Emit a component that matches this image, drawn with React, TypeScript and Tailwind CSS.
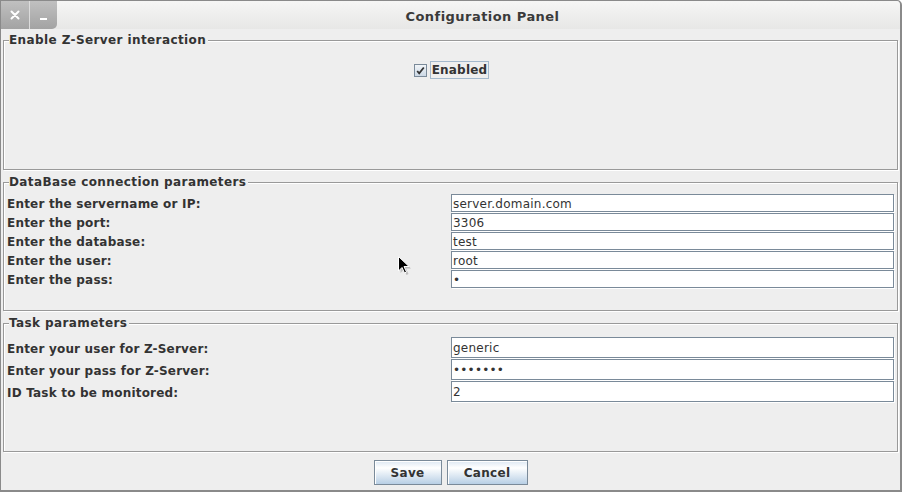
import React from "react";

function Panel({ title, h, children, className = "" }: { title: string; h: string; children?: React.ReactNode; className?: string }) {
  return (
    <div className={`w-[895px] ${h} border border-[#999999] shadow-[inset_1px_1px_0_#ffffff,1px_1px_0_#ffffff] ${className}`}>
      <div className="-mt-[8px] ml-[5px] flex">
        <span className="bg-[#eeeeee] pr-[2px] text-[12px] leading-[15px] font-bold tracking-[0.4px] text-[#333333]">{title}</span>
      </div>
      {children}
    </div>
  );
}

function Row({ label, value, rowH, fieldH }: { label: string; value: string; rowH: string; fieldH: string }) {
  return (
    <div className={`flex items-start ${rowH}`}>
      <div className={`w-[447px] pl-[3px] pt-[2px] flex items-center ${fieldH} text-[12px] font-bold tracking-[0.2px] text-[#333333] whitespace-nowrap`}>{label}</div>
      <div className={`w-[443px] ${fieldH} bg-white border border-[#7a8a99] shadow-[1px_1px_0_#ffffff] flex items-center pl-[1px] pt-px text-[12px] tracking-[0.23px] text-[#333333] leading-[16px] whitespace-nowrap`}>
        {value}
      </div>
    </div>
  );
}

export default function App() {
  return (
    <div className="relative w-[902px] h-[492px] bg-[#eeeeee] border-l border-t border-r-2 border-b-2 border-[#8a8a8a] rounded-tr-[5px] flex flex-col font-['DejaVu_Sans',sans-serif] overflow-hidden">
      {/* title bar */}
      <div className="flex h-[28px] bg-gradient-to-b from-[#f6f6f5] to-[#e7e7e6] rounded-tr-[4px]">
        <div className="w-[28px] h-[28px] bg-gradient-to-b from-[#c0c0c0] to-[#a3a3a3] flex items-center justify-center">
          <svg width="10" height="10" viewBox="0 0 10 10">
            <path d="M1.5 1.5 L8.5 8.5 M8.5 1.5 L1.5 8.5" stroke="#ffffff" strokeWidth="2" strokeLinecap="round" />
          </svg>
        </div>
        <div className="w-px bg-[#dcdcdc]" />
        <div className="w-[27px] h-[28px] bg-gradient-to-b from-[#c0c0c0] to-[#a3a3a3] rounded-br-[5px] flex items-end justify-center pb-[9px]">
          <div className="w-[7px] h-[2px] bg-white" />
        </div>
        <div className="flex-1 pl-[8px] text-center text-[13px] font-bold tracking-[0.45px] leading-[31px] text-[#3a3a3a]">Configuration Panel</div>
      </div>

      <div className="pl-[2px] flex flex-col">
        <Panel title="Enable Z-Server interaction" h="h-[130px]" className="mt-[11px]">
          <div className="mt-[13px] pl-[2px] flex justify-center items-center gap-[3px]">
            <div className="w-[13px] h-[13px] border border-[#7a8a99] bg-gradient-to-b from-[#f2f5f8] to-[#cbd8e5] flex items-center justify-center">
              <svg width="9" height="9" viewBox="0 0 9 9">
                <path d="M1.2 5 L3.2 7.3 L7.8 1.5" stroke="#333333" strokeWidth="1.8" fill="none" />
              </svg>
            </div>
            <div className="h-[18px] border border-[#a3b8cc] px-px flex items-center text-[12px] font-bold tracking-[0.2px] text-[#333333]">Enabled</div>
          </div>
        </Panel>

        <Panel title="DataBase connection parameters" h="h-[129px]" className="mt-[12px]">
          <div className="mt-[4px] flex flex-col">
            <Row label="Enter the servername or IP:" value="server.domain.com" rowH="h-[19px]" fieldH="h-[18px]" />
            <Row label="Enter the port:" value="3306" rowH="h-[19px]" fieldH="h-[18px]" />
            <Row label="Enter the database:" value="test" rowH="h-[19px]" fieldH="h-[18px]" />
            <Row label="Enter the user:" value="root" rowH="h-[19px]" fieldH="h-[18px]" />
            <Row label="Enter the pass:" value="•" rowH="h-[19px]" fieldH="h-[18px]" />
          </div>
        </Panel>

        <Panel title="Task parameters" h="h-[129px]" className="mt-[12px]">
          <div className="mt-[6px] flex flex-col">
            <Row label="Enter your user for Z-Server:" value="generic" rowH="h-[22px]" fieldH="h-[21px]" />
            <Row label="Enter your pass for Z-Server:" value="•••••••" rowH="h-[22px]" fieldH="h-[21px]" />
            <Row label="ID Task to be monitored:" value="2" rowH="h-[22px]" fieldH="h-[21px]" />
          </div>
        </Panel>

        <div className="mt-[8px] pr-[2px] flex justify-center gap-[5px]">
          <button className="w-[68px] h-[25px] border border-[#7a8a99] bg-[linear-gradient(to_bottom,#dde8f3_0%,#ffffff_30%,#b8cfe5_100%)] shadow-[inset_1px_1px_0_#ffffff] text-[12px] font-bold tracking-[0.3px] text-[#333333]">Save</button>
          <button className="w-[81px] h-[25px] border border-[#7a8a99] bg-[linear-gradient(to_bottom,#dde8f3_0%,#ffffff_30%,#b8cfe5_100%)] shadow-[inset_1px_1px_0_#ffffff] text-[12px] font-bold tracking-[0.3px] text-[#333333]">Cancel</button>
        </div>
      </div>

      {/* mouse pointer */}
      <svg className="absolute left-[396px] top-[254px]" width="16" height="22" viewBox="0 0 16 22">
        <path d="M2.5 2.5 L2.5 17 L6 13.5 L8.5 19 L10.5 18 L8 12.5 L13 12.5 Z" fill="rgba(0,0,0,0.2)" transform="translate(1 1)" />
        <path d="M1.5 1.5 L1.5 16 L5 12.5 L7.5 18 L9.5 17 L7 11.5 L12 11.5 Z" fill="#000000" stroke="#ffffff" strokeWidth="1" strokeLinejoin="round" />
      </svg>
    </div>
  );
}
